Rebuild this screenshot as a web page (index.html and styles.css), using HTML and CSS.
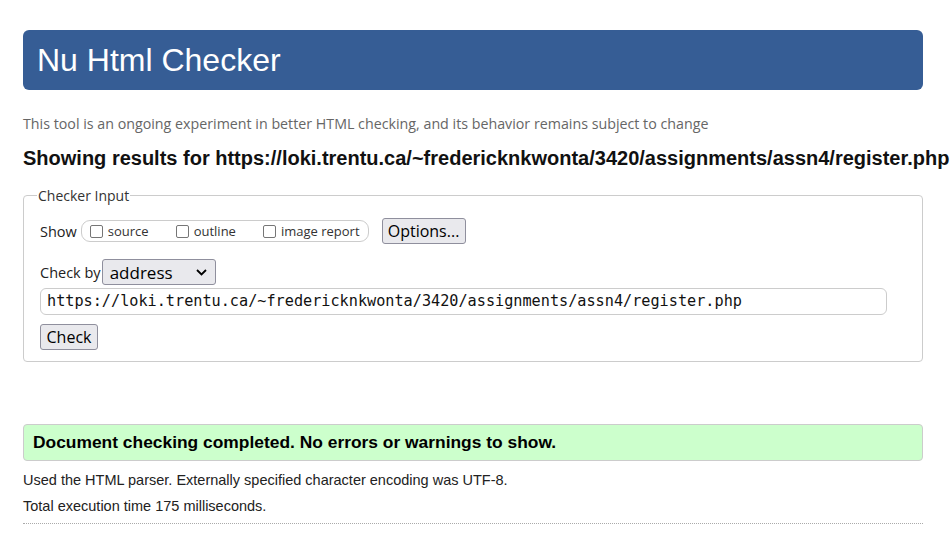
FILE: index.html
```html
<!DOCTYPE html>
<html lang="en">
<head>
<meta charset="utf-8">
<title>Nu Html Checker</title>
<link rel="stylesheet" href="styles.css">
</head>
<body>
<div class="page">
  <h1 class="banner">Nu Html Checker</h1>
  <p class="tagline">This tool is an ongoing experiment in better HTML checking, and its behavior remains subject to change</p>
  <h2 class="results">Showing results for https://loki.trentu.ca/~fredericknkwonta/3420/assignments/assn4/register.php</h2>
  <fieldset class="checker">
    <legend>Checker Input</legend>
    <div class="row show-row">
      <span class="lbl">Show</span>
      <span class="opts">
        <label class="opt"><span class="box"></span>source</label>
        <label class="opt"><span class="box"></span>outline</label>
        <label class="opt"><span class="box"></span>image report</label>
      </span>
      <span class="btn options">Options...</span>
    </div>
    <div class="row by-row">
      <span class="lbl">Check by</span>
      <span class="select">address
        <svg class="chev" width="11" height="7" viewBox="0 0 11 7"><path d="M1 1 L5.5 5.5 L10 1" fill="none" stroke="#000" stroke-width="1.8"/></svg>
      </span>
    </div>
    <div class="url">https://loki.trentu.ca/~fredericknkwonta/3420/assignments/assn4/register.php</div>
    <span class="btn check">Check</span>
  </fieldset>
  <div class="success">Document checking completed. No errors or warnings to show.</div>
  <p class="info">Used the HTML parser. Externally specified character encoding was UTF-8.</p>
  <p class="info">Total execution time 175 milliseconds.</p>
  <div class="rule"></div>
</div>
</body>
</html>
```
FILE: styles.css
```css
html, body {
  margin: 0;
  padding: 0;
  background: #fff;
}
body {
  font-family: "Liberation Sans", Arial, sans-serif;
  color: #222;
}
.page {
  width: 900px;
  padding: 30px 0 0 23px;
}
.banner {
  margin: 0;
  height: 60px;
  line-height: 60px;
  padding-left: 14px;
  background: #365d95;
  color: #fff;
  font-size: 32px;
  font-weight: normal;
  border-radius: 6px;
}
.tagline {
  margin: 24px 0 0;
  font-family: "Open Sans", sans-serif;
  font-size: 14.25px;
  line-height: 20px;
  color: #666;
}
.results {
  margin: 12px 0 0;
  font-size: 20px;
  line-height: 24px;
  font-weight: bold;
  color: #111;
  white-space: nowrap;
}
.checker {
  margin: 16px 0 0;
  padding: 13px 16px 11px 16px;
  border: 1px solid #ccc;
  border-radius: 4px;
  font-family: "Open Sans", sans-serif;
  font-size: 14px;
  color: #222;
}
.checker legend {
  padding: 0 1px;
  margin-left: -3px;
  font-size: 14px;
  color: #333;
}
.row {
  display: flex;
  align-items: center;
}
.lbl {
  font-size: 14.5px;
}
.opts {
  display: flex;
  align-items: center;
  margin-left: 4px;
  height: 20px;
  padding: 0 8px;
  border: 1px solid #ccc;
  border-radius: 9px;
}
.opt {
  display: flex;
  align-items: center;
  font-size: 13px;
  color: #333;
  margin-right: 27px;
}
.opt:last-child { margin-right: 0; }
.box {
  width: 13px;
  height: 13px;
  box-sizing: border-box;
  border: 1px solid #767676;
  border-radius: 2px;
  margin-right: 5px;
  background: #fff;
}
.btn {
  display: inline-flex;
  align-items: center;
  justify-content: center;
  box-sizing: border-box;
  height: 26px;
  padding: 0 6px;
  background: #e9e9ed;
  border: 1px solid #8f8f9d;
  border-radius: 3px;
  font-family: "Open Sans", sans-serif;
  font-size: 16px;
  color: #000;
}
.options {
  margin-left: 13px;
  width: 84px;
}
.by-row {
  margin-top: 15px;
}
.select {
  position: relative;
  display: inline-flex;
  align-items: center;
  box-sizing: border-box;
  width: 114px;
  height: 26px;
  margin-left: 1px;
  padding-left: 7px;
  background: #e9e9ed;
  border: 1px solid #8f8f9d;
  border-radius: 3px;
  font-size: 17px;
  color: #000;
}
.chev {
  position: absolute;
  right: 8px;
  top: 9px;
}
.url {
  margin-top: 3px;
  box-sizing: border-box;
  width: 847px;
  height: 27px;
  line-height: 25px;
  padding-left: 6px;
  border: 1px solid #ccc;
  border-radius: 6px;
  font-family: "DejaVu Sans Mono", monospace;
  font-size: 15.2px;
  color: #111;
}
.check {
  margin-top: 9px;
  width: 58px;
  padding: 0;
}
.success {
  margin-top: 62px;
  box-sizing: border-box;
  height: 37px;
  line-height: 35px;
  padding-left: 9px;
  background: #ccffcc;
  border: 1px solid #ccc;
  border-radius: 4px;
  font-size: 17.4px;
  font-weight: bold;
  color: #000;
}
.info {
  margin: 0;
  font-size: 14.5px;
  line-height: 26px;
  color: #222;
}
.success + .info {
  margin-top: 6px;
}
.rule {
  margin-top: 4px;
  border-top: 1px dotted #aaa;
}
```
